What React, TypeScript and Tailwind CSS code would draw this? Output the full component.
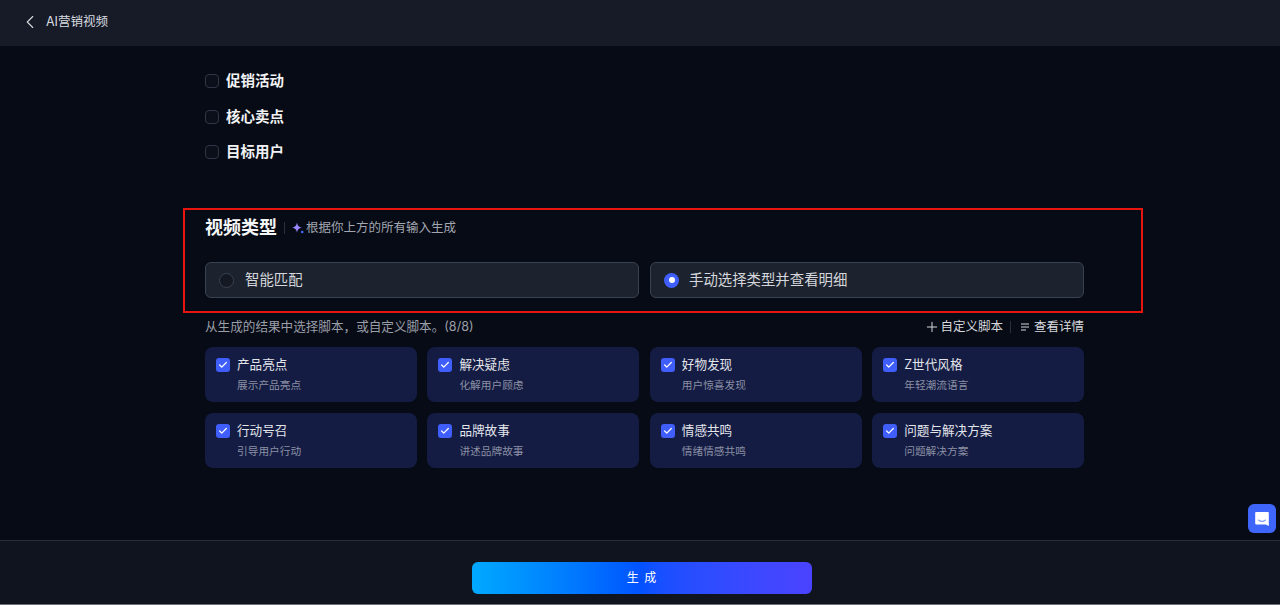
import React from 'react';
import { ChevronLeft, Plus, Check } from 'lucide-react';

const goals = ['促销活动', '核心卖点', '目标用户'];

const scripts = [
  { title: '产品亮点', desc: '展示产品亮点' },
  { title: '解决疑虑', desc: '化解用户顾虑' },
  { title: '好物发现', desc: '用户惊喜发现' },
  { title: 'Z世代风格', desc: '年轻潮流语言' },
  { title: '行动号召', desc: '引导用户行动' },
  { title: '品牌故事', desc: '讲述品牌故事' },
  { title: '情感共鸣', desc: '情绪情感共鸣' },
  { title: '问题与解决方案', desc: '问题解决方案' },
];

const App: React.FC = () => {
  return (
    <div className="relative flex h-[605px] w-[1280px] flex-col overflow-hidden bg-[#070b15] font-['Inter','Noto_Sans_CJK_SC',sans-serif] text-white">
      <header className="flex h-[46px] shrink-0 items-center bg-[#171b27] pb-[2px] pl-[19px]">
        <ChevronLeft className="h-[22px] w-[22px] text-[#d5d7dc]" strokeWidth={1.2} />
        <span className="ml-[5px] text-[12.5px] text-[#d9dbe0]">AI营销视频</span>
      </header>

      <main className="flex-1 pl-[205px]">
        <div className="mt-[25px] flex flex-col gap-[15.5px]">
          {goals.map(g => (
            <label key={g} className="flex h-5 items-center gap-[7px]">
              <span className="h-[14px] w-[14px] rounded-[4px] border border-[#2f3645] bg-[#0b0f1a]" />
              <span className="text-[14.5px] font-bold text-[#f1f2f4]">{g}</span>
            </label>
          ))}
        </div>

        <section className="-ml-[22px] mt-[46px] h-[105px] w-[960px] border-2 border-[#e8150f] pl-[20px] pt-[6px]">
          <div className="flex h-6 items-center">
            <h2 className="text-lg font-bold text-[#f4f5f6]">视频类型</h2>
            <span className="ml-[7px] h-3 w-px bg-[#2b303b]" />
            <svg className="ml-[7px] h-3 w-3" viewBox="0 0 12 12">
              <path d="M5 .5 C5.6 3.6 6.6 4.8 10 5.6 C6.6 6.4 5.6 7.6 5 10.8 C4.4 7.6 3.4 6.4 0 5.6 C3.4 4.8 4.4 3.6 5 .5Z" fill="#9a86ff" />
              <circle cx="10.2" cy="10" r="1.3" fill="#3f6bff" />
            </svg>
            <span className="ml-[2px] text-[12.5px] text-[#a2a6b0]">根据你上方的所有输入生成</span>
          </div>

          <div className="mt-[22px] flex gap-[11px]">
            <div className="flex h-[36px] w-[434px] items-center rounded-md border border-[#3a414f] bg-[#1d232e] pl-[13px]">
              <span className="h-[15px] w-[15px] rounded-full border border-[#3a414f] bg-[#141923]" />
              <span className="ml-[11px] text-[14.4px] text-[#d5d7dc]">智能匹配</span>
            </div>
            <div className="flex h-[36px] w-[434px] items-center rounded-md border border-[#3a414f] bg-[#1d232e] pl-[13px]">
              <span className="flex h-[15px] w-[15px] items-center justify-center rounded-full bg-[#3f5efb]">
                <span className="h-[6px] w-[6px] rounded-full bg-white" />
              </span>
              <span className="ml-[10px] text-[14.4px] text-[#d5d7dc]">手动选择类型并查看明细</span>
            </div>
          </div>
        </section>

        <div className="mt-[5px] flex h-[18px] w-[879px] items-center justify-between">
          <span className="text-[12.6px] text-[#9a9ea8]">从生成的结果中选择脚本，或自定义脚本。(8/8)</span>
          <div className="flex items-center text-[12.5px] text-[#d5d7dc]">
            <Plus className="h-4 w-4" strokeWidth={1.5} />
            <span className="ml-0">自定义脚本</span>
            <span className="ml-[7px] mr-[9px] h-3 w-px bg-[#2b303b]" />
            <svg className="h-[10px] w-[10px]" viewBox="0 0 10 10" stroke="#d5d7dc" strokeWidth="1">
              <path d="M1 2h8M1 5h8M1 8h5" />
            </svg>
            <span className="ml-1">查看详情</span>
          </div>
        </div>

        <div className="mt-[11px] grid w-[879px] grid-cols-4 gap-x-[10.6px] gap-y-[11px]">
          {scripts.map(s => (
            <div key={s.title} className="flex h-[55px] rounded-lg bg-[#141c44] pl-[11px] pt-[11px]">
              <span className="flex h-[14px] w-[14px] items-center justify-center rounded-[3px] bg-[#3f5efb]">
                <Check className="h-[10px] w-[10px] text-white" strokeWidth={3} />
              </span>
              <div className="ml-[7px] -mt-[2px]">
                <div className="text-[12.6px] leading-[17px] text-[#e3e5ea]">{s.title}</div>
                <div className="mt-[6px] text-[10.7px] leading-[14px] text-[#8b90a3]">{s.desc}</div>
              </div>
            </div>
          ))}
        </div>
      </main>

      <footer className="flex h-[64px] shrink-0 justify-center border-t border-[#2a2e38] bg-[#10141e] pl-[4px] pt-[21px]">
        <button className="h-[32px] w-[340px] rounded-md bg-gradient-to-r from-[#00a9ff] via-[#0451ff] to-[#4a43ff] text-xs tracking-[1px] text-white">
          生 成
        </button>
      </footer>
      <div className="h-px shrink-0 bg-[#6b6e75]" />

      <button className="absolute left-[1248px] top-[504px] flex h-[29px] w-7 items-center justify-center rounded-md bg-[#3f66fb]">
        <svg className="h-4 w-4" viewBox="0 0 16 16">
          <path d="M2 1h12a.8.8 0 0 1 .8.8V15l-3-1.6H2a.8.8 0 0 1-.8-.8V1.8A.8.8 0 0 1 2 1Z" fill="#fff" />
          <path d="M4.5 9c2 1.6 5 1.6 7 0" fill="none" stroke="#7f9bfb" strokeWidth="1.1" strokeLinecap="round" />
        </svg>
      </button>
    </div>
  );
};

export default App;
